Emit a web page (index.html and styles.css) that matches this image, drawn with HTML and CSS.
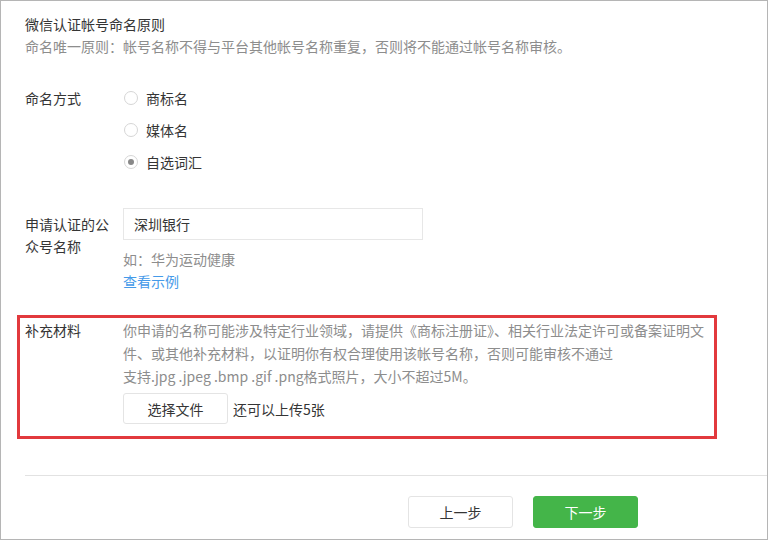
FILE: index.html
```html
<!DOCTYPE html>
<html lang="zh-CN">
<head>
<meta charset="utf-8">
<title>微信认证帐号命名</title>
<link rel="stylesheet" href="styles.css">
</head>
<body>
<div class="page">
  <div class="content">
    <div class="intro">
      <div class="intro-title">微信认证帐号命名原则</div>
      <div class="intro-desc">命名唯一原则：帐号名称不得与平台其他帐号名称重复，否则将不能通过帐号名称审核。</div>
    </div>

    <div class="form-row naming">
      <div class="label label-radio">命名方式</div>
      <div class="radio-list">
        <label class="radio-item"><span class="radio"></span><span>商标名</span></label>
        <label class="radio-item"><span class="radio"></span><span>媒体名</span></label>
        <label class="radio-item"><span class="radio checked"></span><span>自选词汇</span></label>
      </div>
    </div>

    <div class="form-row name">
      <div class="label label-name">申请认证的公众号名称</div>
      <div class="field">
        <div class="input">深圳银行</div>
        <div class="hint">如：华为运动健康</div>
        <a class="link" href="#">查看示例</a>
      </div>
    </div>

    <div class="supplement">
      <div class="label label-supp">补充材料</div>
      <div class="field">
        <p class="supp-text">你申请的名称可能涉及特定行业领域，请提供《商标注册证》、相关行业法定许可或备案证明文件、或其他补充材料，以证明你有权合理使用该帐号名称，否则可能审核不通过<br>支持.jpg .jpeg .bmp .gif .png格式照片，大小不超过5M。</p>
        <div class="upload">
          <span class="btn btn-file">选择文件</span>
          <span class="upload-note">还可以上传5张</span>
        </div>
      </div>
    </div>

    <div class="divider"></div>

    <div class="footer">
      <span class="btn btn-default">上一步</span>
      <span class="btn btn-primary">下一步</span>
    </div>
  </div>
</div>
</body>
</html>
```

FILE: styles.css
```css
html, body {
  margin: 0;
  padding: 0;
  background: #ffffff;
}

.page {
  width: 768px;
  height: 540px;
  box-sizing: border-box;
  border: 1px solid #b5b5b5;
  background: #ffffff;
  overflow: hidden;
  font-family: "Microsoft YaHei", "Noto Sans CJK SC", "Noto Sans", sans-serif;
  font-size: 14px;
  color: #353535;
}

.content {
  padding: 12px 0 0 24px;
}

.intro-title,
.intro-desc {
  line-height: 22px;
}

.intro-desc {
  color: #8d8d8d;
}

.form-row {
  display: flex;
  align-items: flex-start;
}

.label {
  width: 98px;
  flex: none;
  box-sizing: border-box;
  padding-right: 10px;
}

.naming {
  margin-top: 25px;
}

.label-radio {
  line-height: 32px;
}

.radio-list {
  display: flex;
  flex-direction: column;
}

.radio-item {
  display: flex;
  align-items: center;
  height: 32px;
}

.radio {
  width: 12px;
  height: 12px;
  border: 1px solid #d6d6d6;
  border-radius: 50%;
  margin: 0 8px 0 1px;
  display: flex;
  align-items: center;
  justify-content: center;
  background: #ffffff;
}

.radio.checked::after {
  content: "";
  width: 6px;
  height: 6px;
  border-radius: 50%;
  background: #888888;
}

.name {
  margin-top: 30px;
}

.label-name {
  line-height: 22px;
  padding-top: 5px;
}

.input {
  width: 300px;
  height: 32px;
  box-sizing: border-box;
  border: 1px solid #e7e7e7;
  padding-left: 10px;
  line-height: 30px;
}

.hint {
  margin-top: 8px;
  line-height: 22px;
  color: #8d8d8d;
}

.link {
  display: block;
  line-height: 22px;
  color: #459ae9;
  text-decoration: none;
}

.supplement {
  display: flex;
  margin: 23px 0 0 -8px;
  width: 700px;
  height: 124px;
  box-sizing: border-box;
  border: 3px solid #e2393d;
  padding: 1px 0 0 5px;
}

.label-supp {
  line-height: 23px;
}

.supp-text {
  margin: 0;
  width: 592px;
  line-height: 23px;
  color: #8d8d8d;
}

.upload {
  display: flex;
  align-items: center;
  margin-top: 5px;
}

.btn {
  display: inline-flex;
  align-items: center;
  justify-content: center;
  width: 105px;
  box-sizing: border-box;
  border-radius: 3px;
}

.btn-file {
  height: 31px;
  border: 1px solid #e4e4e4;
  background: #ffffff;
  color: #353535;
}

.upload-note {
  margin-left: 5px;
}

.divider {
  margin-top: 36px;
  height: 1px;
  background: #e2e2e2;
}

.footer {
  display: flex;
  gap: 20px;
  margin-top: 20px;
  padding-left: 383px;
}

.btn-default {
  height: 32px;
  border: 1px solid #e4e4e4;
  background: #ffffff;
  color: #353535;
}

.btn-primary {
  height: 32px;
  border: 1px solid #44b549;
  background: #44b549;
  color: #ffffff;
}
```
